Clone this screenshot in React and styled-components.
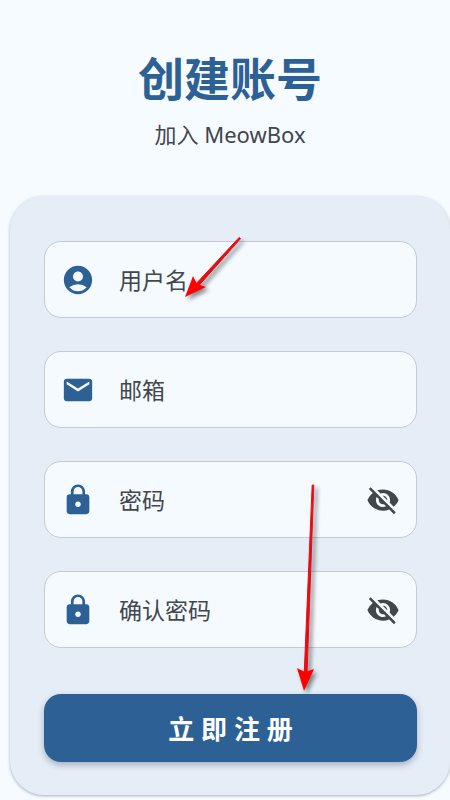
import React, { useState } from 'react'
import styled, { createGlobalStyle } from 'styled-components'
import { MdAccountCircle, MdEmail, MdLock, MdVisibility, MdVisibilityOff } from 'react-icons/md'

const GlobalStyle = createGlobalStyle`
    * {
        box-sizing: border-box;
    }
    body {
        margin: 0;
        background: #f6fbff;
        color: #41474d;
        font-family: "Noto Sans", "Noto Sans CJK SC", sans-serif;
        overflow-x: hidden;
    }
`

const Page = styled.main`
    position: relative;
    padding: 48px 0 4px 10px;
`

const Header = styled.header`
    margin-bottom: 46px;
    text-align: center;
`

const Title = styled.h1`
    margin: 0 0 10px;
    color: #2d6196;
    font-size: 46px;
    font-weight: 700;
    line-height: 60px;
`

const Subtitle = styled.p`
    margin: 0;
    font-size: 22px;
    line-height: 32px;
`

const Card = styled.form`
    display: flex;
    flex-direction: column;
    gap: 33px;
    padding: 45px 33px 33px 34px;
    background: #e5edf7;
    border-radius: 34px;
    box-shadow: 0 1px 3px rgba(50, 65, 85, 0.4);
`

const FieldBox = styled.label`
    display: flex;
    align-items: center;
    height: 77px;
    padding: 0 16px;
    color: #2d6196;
    background: #f5faff;
    border: 1px solid #c3cad3;
    border-radius: 17px;

    > svg {
        flex: none;
    }
`

const TextInput = styled.input`
    flex: 1;
    min-width: 0;
    margin-left: 24px;
    padding: 0;
    color: #41474d;
    background: transparent;
    border: 0;
    outline: 0;
    font-family: inherit;
    font-size: 23px;
    line-height: 32px;

    &::placeholder {
        color: #41474d;
        opacity: 1;
    }
`

const EyeButton = styled.button`
    display: flex;
    padding: 0;
    color: #41474d;
    background: none;
    border: 0;
    cursor: pointer;
`

const SubmitButton = styled.button`
    height: 68px;
    margin-top: 13px;
    color: #fff;
    background: #2d6196;
    border: 0;
    border-radius: 17px;
    box-shadow: 0 3px 6px rgba(50, 65, 85, 0.35);
    font-family: inherit;
    font-size: 26px;
    font-weight: 700;
    cursor: pointer;
`

const Arrows = styled.svg`
    position: absolute;
    top: 0;
    left: 0;
    pointer-events: none;
    filter: drop-shadow(3px 3px 2px rgba(0, 0, 0, 0.45));
`

const Field = ({ icon: Icon, label, type = 'text' }) => {
    const [visible, setVisible] = useState(false)
    const isPassword = type === 'password'

    return (
        <FieldBox>
            <Icon size={34} />
            <TextInput type={visible ? 'text' : type} placeholder={label} aria-label={label} />
            {isPassword && (
                <EyeButton type="button" aria-label="显示密码" onClick={() => setVisible(!visible)}>
                    {visible ? <MdVisibility size={34} /> : <MdVisibilityOff size={34} />}
                </EyeButton>
            )}
        </FieldBox>
    )
}

export default function App() {
    return (
        <>
            <GlobalStyle />
            <Page>
                <Header>
                    <Title>创建账号</Title>
                    <Subtitle>加入 MeowBox</Subtitle>
                </Header>
                <Card onSubmit={(event) => event.preventDefault()}>
                    <Field icon={MdAccountCircle} label="用户名" />
                    <Field icon={MdEmail} label="邮箱" />
                    <Field icon={MdLock} label="密码" type="password" />
                    <Field icon={MdLock} label="确认密码" type="password" />
                    <SubmitButton type="submit">立 即 注 册</SubmitButton>
                </Card>
                <Arrows width="450" height="800" viewBox="0 0 450 800" aria-hidden="true">
                    <path d="M239.2 237.4L240.6 238.6L199 285.4L196.6 283.2Z" fill="#e60d12" stroke="#e60d12" strokeLinejoin="round" />
                    <path d="M185 297L193 276L197 284L206 287Z" fill="#ff0000" />
                    <path d="M312.2 485H313.8L307 674H304.2Z" fill="#e60d12" stroke="#e60d12" strokeLinejoin="round" />
                    <path d="M304 691L297 668L305 672L314 669Z" fill="#ff0000" />
                </Arrows>
            </Page>
        </>
    )
}
